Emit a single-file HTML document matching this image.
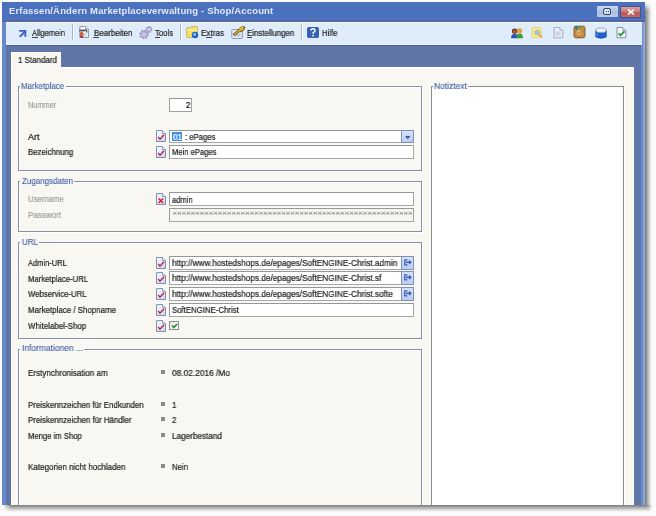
<!DOCTYPE html>
<html><head><meta charset="utf-8">
<style>
*{margin:0;padding:0;box-sizing:border-box}
:root{--glab:#4260ac;--dis:#a0a0a0;--txt:#1e1e1e}
html,body{width:656px;height:516px;overflow:hidden;background:#fbfbfb}
body{position:relative;font-family:"Liberation Sans",sans-serif;font-size:9px;line-height:10px;color:var(--txt)}
.a{position:absolute}
.t{position:absolute;white-space:pre;font-size:9px;line-height:10px;transform-origin:0 0;will-change:transform;-webkit-text-stroke:0.22px currentColor}
#clip{position:absolute;left:0;top:0;width:656px;height:505px;overflow:hidden}
#shadowR{left:645px;top:3px;width:7px;height:509px;background:linear-gradient(90deg,#7a7a7a,#b8b8b8 45%,#e8e8e8 80%,#fafafa);-webkit-mask-image:linear-gradient(180deg,transparent 0,#000 8px,#000 calc(100% - 7px),transparent)}
#shadowB{left:3px;top:505px;width:649px;height:7px;background:linear-gradient(180deg,#7a7a7a,#b8b8b8 45%,#e8e8e8 80%,#fafafa);-webkit-mask-image:linear-gradient(90deg,transparent 0,#000 8px,#000 calc(100% - 7px),transparent)}
#win{left:2px;top:2px;width:643px;height:503px;background:#5a7cc6}
#title{left:2px;top:2px;width:643px;height:20px;background:#4b70bd;border-bottom:2px solid #56689c}
#titletext{left:9px;top:6px;font-size:9.5px;line-height:10px;font-weight:bold;color:#e0e8f6;letter-spacing:0.15px;transform:none;-webkit-text-stroke:0}
#lb{left:2px;top:22px;width:4px;height:483px;background:#6888cc}
#rb{left:641px;top:22px;width:4px;height:483px;background:linear-gradient(90deg,#6686cc 0,#7292d6 50%,#9ab2da 75%,#8aa2cc)}
#toolbar{left:6px;top:22px;width:636px;height:23px;background:#dfedfb;border-top:1px solid #f2f9ff;border-bottom:1px solid #f0f7ff}
#strip{left:6px;top:45px;width:635px;height:460px;background:#6076a7;border-top:1px solid #4a5c8c}
#panel{left:11px;top:67px;width:623px;height:438px;background:#f9f7f1;border-top:1px solid #fff;border-right:1px solid #fff;border-left:1px solid #fbfcfd}
#tab{left:11px;top:52px;width:50px;height:16px;background:#f9f7f1;border-top:1px solid #fff;border-left:1px solid #fff}
.sep{position:absolute;top:24px;width:2px;height:16px;background:#a7b4cc;border-right:1px solid #fff}
.grp{position:absolute;border:1px solid #8a8ea8;box-shadow:1px 1px 0 #fff,inset 1px 1px 0 #fff}
.gmask{position:absolute;height:3px;background:#f9f7f1}
.inp{position:absolute;left:169px;width:245px;height:14px;background:#fff;border:1px solid #a6a6a6;border-top-color:#969696;border-left-color:#9c9c9c}
.ico{position:absolute;left:156px;width:10px;height:12px}
.btn{position:absolute;left:401px;width:13px;height:14px;background:linear-gradient(180deg,#d6e2fa,#b9ccf3);border:1px solid #7f90b8}
.bul{position:absolute;left:161px;width:4px;height:4px;background:#8a8a8a}

</style></head><body>
<div id="clip">
<div class="a" id="win"></div>
<div class="a" id="title"></div>
<div class="t" id="titletext">Erfassen/Ändern Marketplaceverwaltung - Shop/Account</div>
<div class="a" style="left:597px;top:6px;width:21px;height:11px;background:linear-gradient(180deg,#c8d8f0,#b4c6e6 45%,#a8bcdc 55%,#bccde9);border-radius:1px"></div>
<div class="a" style="left:603px;top:8px;width:8px;height:7px;border:1.3px solid #34426c;border-radius:2px;background:#d6e0f0"></div>
<div class="a" style="left:605.5px;top:10.8px;width:1.3px;height:1.3px;background:#34426c"></div>
<div class="a" style="left:607.5px;top:10.8px;width:1.3px;height:1.3px;background:#34426c"></div>
<div class="a" style="left:620px;top:6px;width:21px;height:12px;background:linear-gradient(180deg,#daa0a0,#cc7a7a 45%,#bc5454 60%,#c86a6a);border:1px solid #45508a;border-radius:1px"></div>
<svg class="a" style="left:627px;top:9px" width="8" height="6" viewBox="0 0 8 6"><path d="M1 0.5 L7 5.5 M7 0.5 L1 5.5" stroke="#f6f6f6" stroke-width="1.7"/></svg>
<div class="a" id="lb"></div>
<div class="a" id="rb"></div>
<div class="a" id="toolbar"></div>
<div class="a" id="strip"></div>
<div class="a" id="panel"></div>
<div class="a" id="tab"></div>

<svg class="a" style="left:18px;top:29px" width="10" height="10" viewBox="0 0 10 10"><path d="M1.8 7.8 L7.2 2.4" stroke="#3b5ec6" stroke-width="2" fill="none"/><path d="M1.2 0.9 H8.3 V7.8 L6.4 7.8 L6.4 2.8 L1.2 2.8 Z" fill="#3b5ec6"/></svg>
<div class="a" style="left:32px;top:37px;width:6px;height:1px;background:#444"></div>
<div class="sep" style="left:72px"></div>
<svg class="a" style="left:78px;top:25px" width="12" height="14" viewBox="0 0 12 14"><path d="M1.8 1.5 H7.8 L10.5 4.2 V12.5 H1.8 Z" fill="#f2f5fa" stroke="#8a92a8" stroke-width="0.9"/><path d="M7.8 1.5 V4.2 H10.5" fill="#e2e6ee" stroke="#8a92a8" stroke-width="0.7"/><rect x="4.5" y="8" width="4" height="3.5" fill="#d0d8ea"/><path d="M1.2 5.5 H7.4" stroke="#4e545e" stroke-width="1.8"/><path d="M7 4.7 Q8.8 4.7 8.8 6.6 V7.6" stroke="#4e545e" stroke-width="1.3" fill="none"/><ellipse cx="3.6" cy="9.6" rx="1.9" ry="2.9" fill="#d5603f"/><ellipse cx="3.7" cy="11.8" rx="1.3" ry="0.9" fill="#7a1e0e"/></svg>
<div class="a" style="left:93px;top:37px;width:6px;height:1px;background:#444"></div>
<svg class="a" style="left:137px;top:25px" width="16" height="15" viewBox="0 0 16 15"><g fill="none" stroke="#9a96c8"><circle cx="7" cy="9.5" r="3.9" stroke-width="1.8" stroke-dasharray="1.6 1.45"/><circle cx="11.9" cy="4.6" r="2.8" stroke-width="1.5" stroke-dasharray="1.3 1.1"/></g><circle cx="7" cy="9.5" r="3.3" fill="#c4c0e4" stroke="#8c88bc" stroke-width="0.7"/><circle cx="7" cy="9.5" r="1.3" fill="#eeecfa" stroke="#9490c0" stroke-width="0.6"/><circle cx="11.9" cy="4.6" r="2.3" fill="#c4c0e4" stroke="#8c88bc" stroke-width="0.7"/><circle cx="11.9" cy="4.6" r="0.9" fill="#eeecfa"/></svg>
<div class="a" style="left:155px;top:37px;width:5px;height:1px;background:#444"></div>
<div class="sep" style="left:180px"></div>
<svg class="a" style="left:185px;top:25px" width="14" height="14" viewBox="0 0 14 14"><path d="M1.5 4 Q1.5 2.5 3 2.5 H5.5 L6.5 1.5 H11.5 Q12.5 1.5 12.5 2.5 V11.5 Q12.5 12.5 11.5 12.5 H3 Q1.5 12.5 1.5 11 Z" fill="#f2dc6a" stroke="#d0b040" stroke-width="0.8"/><path d="M2 5 H12" stroke="#fff6b8" stroke-width="1"/><circle cx="10" cy="10" r="3.2" fill="#1e64c8"/><circle cx="9.6" cy="9.4" r="1.3" fill="#9ad4ff"/></svg>
<div class="a" style="left:206px;top:37px;width:6px;height:1px;background:#444"></div>
<svg class="a" style="left:230px;top:25px" width="16" height="15" viewBox="0 0 16 15"><rect x="1.8" y="4.5" width="10.5" height="9" rx="1" fill="#e8eef8" stroke="#8a96b4"/><rect x="3.5" y="9" width="7" height="2.5" fill="#b4c0da"/><path d="M3 9.2 L8 5.2 Q9.5 2.4 12.5 1.6 L15 2 L13.8 5 Q12 7 9.6 6.8 L4.6 10.4 Z" fill="#d4aa1c" stroke="#5c4410" stroke-width="0.8"/><path d="M9.5 3.6 Q11 2.6 12.8 2.6" stroke="#f4e070" stroke-width="0.8" fill="none"/></svg>
<div class="a" style="left:247px;top:37px;width:5px;height:1px;background:#444"></div>
<div class="sep" style="left:301px"></div>
<svg class="a" style="left:307px;top:27px" width="12" height="11" viewBox="0 0 12 11"><rect x="0.5" y="0.3" width="11" height="10.5" rx="1.5" fill="#3562b8" stroke="#2a4e9a" stroke-width="0.8"/><path d="M4 3.6 Q4 1.8 6 1.8 Q8 1.8 8 3.6 Q8 4.8 6.2 5.6 V6.8" stroke="#fff" stroke-width="1.5" fill="none"/><rect x="5.4" y="7.8" width="1.6" height="1.6" fill="#fff"/></svg>

<svg class="a" style="left:510px;top:27px" width="14" height="12" viewBox="0 0 14 12"><path d="M1 11.3 Q1 7 4.6 7 Q8.2 7 8.2 11.3 Z" fill="#2a50b4"/><circle cx="4.6" cy="4.3" r="2.7" fill="#6a3a26"/><circle cx="4.6" cy="4.8" r="1.7" fill="#b0603a"/><path d="M6.2 11.3 Q6.2 6.6 9.6 6.6 Q13 6.6 13 11.3 Z" fill="#3c9a4c"/><circle cx="9.6" cy="3.9" r="2.6" fill="#e6a040"/></svg>
<svg class="a" style="left:531px;top:26px" width="13" height="13" viewBox="0 0 13 13"><path d="M1 3 Q1 1.5 2.5 1.5 H8.5 Q10 1.5 10 3 V10 Q10 11.5 8.5 11.5 H2.5 Q1 11.5 1 10 Z" fill="#f6eaa0" stroke="#e8d060" stroke-width="1"/><circle cx="6.2" cy="6.6" r="2.6" fill="#8cc8ec" stroke="#d8c060" stroke-width="0.8"/><path d="M8.2 8.6 L11 11.4" stroke="#e89850" stroke-width="2"/></svg>
<svg class="a" style="left:553px;top:26px" width="11" height="13" viewBox="0 0 11 13"><path d="M1 1.5 H6.8 L9.8 4.5 V11.8 H1 Z" fill="#eceff6" stroke="#a4acc4"/><path d="M6.8 1.5 V4.5 H9.8" fill="#dce0ea" stroke="#a4acc4" stroke-width="0.8"/><rect x="2.5" y="5.5" width="5" height="4.5" fill="#d0d6e4"/></svg>
<svg class="a" style="left:573px;top:25px" width="13" height="14" viewBox="0 0 13 14"><rect x="1" y="1.2" width="11" height="11.6" rx="2" fill="#c48c44" stroke="#7a5020" stroke-width="0.9"/><path d="M1.5 2 Q2 1.4 3 1.4 H5.5 L3.5 5.5 Z" fill="#1e7ca8"/><path d="M5.5 1.4 H9 L6.5 5 Z" fill="#5aa838"/><circle cx="6" cy="7.5" r="2.6" fill="#e4b474"/><path d="M4.6 7 L6 8.6 L8 6.2" stroke="#b07030" stroke-width="0.9" fill="none"/></svg>
<svg class="a" style="left:595px;top:27px" width="12" height="12" viewBox="0 0 12 12"><path d="M0.8 3.2 V10 Q6 12.6 11.2 10 V3.2 Z" fill="#1e62d2" stroke="#1646a0" stroke-width="0.8"/><path d="M2 6 V9.5" stroke="#5aa0f0" stroke-width="1"/><ellipse cx="6" cy="3.2" rx="5.2" ry="2.3" fill="#eef2f8" stroke="#8a98b8" stroke-width="0.8"/></svg>
<svg class="a" style="left:616px;top:26px" width="11" height="13" viewBox="0 0 11 13"><path d="M1 1.5 H6.8 L9.8 4.5 V11.8 H1 Z" fill="#f6f8fb" stroke="#868ea6"/><path d="M6.8 1.5 V4.5 H9.8" fill="#e4e8f0" stroke="#868ea6" stroke-width="0.8"/><path d="M2.6 7.4 L4.6 9.4 L8.4 5.4" stroke="#2a9a3a" stroke-width="1.8" fill="none"/></svg>

<!-- groups -->
<div class="grp" style="left:18px;top:86px;width:404px;height:85px"></div>
<div class="gmask" style="left:20px;top:85px;width:46px"></div>
<div class="grp" style="left:18px;top:181px;width:404px;height:51px"></div>
<div class="gmask" style="left:20px;top:180px;width:54px"></div>
<div class="grp" style="left:18px;top:242px;width:404px;height:97px"></div>
<div class="gmask" style="left:20px;top:241px;width:19px"></div>
<div class="grp" style="left:18px;top:349px;width:404px;height:170px"></div>
<div class="gmask" style="left:20px;top:348px;width:64px"></div>
<div class="grp" style="left:431px;top:86px;width:193px;height:430px;background:#fff;border-color:#8c8c8c"></div>
<div class="gmask" style="left:433px;top:85px;width:35px"></div>

<div class="a" style="left:169px;top:98px;width:23px;height:14px;background:#fff;border:1px solid #a2a2a2;border-top-color:#969696"></div>
<svg class="ico" style="top:130px" viewBox="0 0 10 12"><use href="#chk"/></svg>
<svg class="ico" style="top:146px" viewBox="0 0 10 12"><use href="#chk"/></svg>
<div class="inp" style="top:130px;height:13px"><div class="a" style="left:2px;top:1px;width:10px;height:9px;background:#3d8ee6"></div></div>
<div class="btn" style="top:130px;height:13px"><svg class="a" style="left:3px;top:5px" width="6" height="4"><path d="M0 0 H5.5 L2.75 3.2 Z" fill="#3a58a0"/></svg></div>
<div class="inp" style="top:145px"></div>

<svg class="ico" style="top:193px" viewBox="0 0 10 12"><use href="#xdoc"/></svg>
<div class="inp" style="top:192px"></div>
<div class="inp" style="top:208px;background:#f6f5f0"></div>
<svg class="a" style="left:172px;top:211px" width="240" height="5" viewBox="0 0 240 5"><path d="M1.30 0.80L4.30 3.80M4.30 0.80L1.30 3.80M1.10 2.30H4.50M5.83 0.80L8.83 3.80M8.83 0.80L5.83 3.80M5.63 2.30H9.03M10.36 0.80L13.36 3.80M13.36 0.80L10.36 3.80M10.16 2.30H13.56M14.89 0.80L17.89 3.80M17.89 0.80L14.89 3.80M14.69 2.30H18.09M19.42 0.80L22.42 3.80M22.42 0.80L19.42 3.80M19.22 2.30H22.62M23.95 0.80L26.95 3.80M26.95 0.80L23.95 3.80M23.75 2.30H27.15M28.48 0.80L31.48 3.80M31.48 0.80L28.48 3.80M28.28 2.30H31.68M33.01 0.80L36.01 3.80M36.01 0.80L33.01 3.80M32.81 2.30H36.21M37.54 0.80L40.54 3.80M40.54 0.80L37.54 3.80M37.34 2.30H40.74M42.07 0.80L45.07 3.80M45.07 0.80L42.07 3.80M41.87 2.30H45.27M46.60 0.80L49.60 3.80M49.60 0.80L46.60 3.80M46.40 2.30H49.80M51.13 0.80L54.13 3.80M54.13 0.80L51.13 3.80M50.93 2.30H54.33M55.66 0.80L58.66 3.80M58.66 0.80L55.66 3.80M55.46 2.30H58.86M60.19 0.80L63.19 3.80M63.19 0.80L60.19 3.80M59.99 2.30H63.39M64.72 0.80L67.72 3.80M67.72 0.80L64.72 3.80M64.52 2.30H67.92M69.25 0.80L72.25 3.80M72.25 0.80L69.25 3.80M69.05 2.30H72.45M73.78 0.80L76.78 3.80M76.78 0.80L73.78 3.80M73.58 2.30H76.98M78.31 0.80L81.31 3.80M81.31 0.80L78.31 3.80M78.11 2.30H81.51M82.84 0.80L85.84 3.80M85.84 0.80L82.84 3.80M82.64 2.30H86.04M87.37 0.80L90.37 3.80M90.37 0.80L87.37 3.80M87.17 2.30H90.57M91.90 0.80L94.90 3.80M94.90 0.80L91.90 3.80M91.70 2.30H95.10M96.43 0.80L99.43 3.80M99.43 0.80L96.43 3.80M96.23 2.30H99.63M100.96 0.80L103.96 3.80M103.96 0.80L100.96 3.80M100.76 2.30H104.16M105.49 0.80L108.49 3.80M108.49 0.80L105.49 3.80M105.29 2.30H108.69M110.02 0.80L113.02 3.80M113.02 0.80L110.02 3.80M109.82 2.30H113.22M114.55 0.80L117.55 3.80M117.55 0.80L114.55 3.80M114.35 2.30H117.75M119.08 0.80L122.08 3.80M122.08 0.80L119.08 3.80M118.88 2.30H122.28M123.61 0.80L126.61 3.80M126.61 0.80L123.61 3.80M123.41 2.30H126.81M128.14 0.80L131.14 3.80M131.14 0.80L128.14 3.80M127.94 2.30H131.34M132.67 0.80L135.67 3.80M135.67 0.80L132.67 3.80M132.47 2.30H135.87M137.20 0.80L140.20 3.80M140.20 0.80L137.20 3.80M137.00 2.30H140.40M141.73 0.80L144.73 3.80M144.73 0.80L141.73 3.80M141.53 2.30H144.93M146.26 0.80L149.26 3.80M149.26 0.80L146.26 3.80M146.06 2.30H149.46M150.79 0.80L153.79 3.80M153.79 0.80L150.79 3.80M150.59 2.30H153.99M155.32 0.80L158.32 3.80M158.32 0.80L155.32 3.80M155.12 2.30H158.52M159.85 0.80L162.85 3.80M162.85 0.80L159.85 3.80M159.65 2.30H163.05M164.38 0.80L167.38 3.80M167.38 0.80L164.38 3.80M164.18 2.30H167.58M168.91 0.80L171.91 3.80M171.91 0.80L168.91 3.80M168.71 2.30H172.11M173.44 0.80L176.44 3.80M176.44 0.80L173.44 3.80M173.24 2.30H176.64M177.97 0.80L180.97 3.80M180.97 0.80L177.97 3.80M177.77 2.30H181.17M182.50 0.80L185.50 3.80M185.50 0.80L182.50 3.80M182.30 2.30H185.70M187.03 0.80L190.03 3.80M190.03 0.80L187.03 3.80M186.83 2.30H190.23M191.56 0.80L194.56 3.80M194.56 0.80L191.56 3.80M191.36 2.30H194.76M196.09 0.80L199.09 3.80M199.09 0.80L196.09 3.80M195.89 2.30H199.29M200.62 0.80L203.62 3.80M203.62 0.80L200.62 3.80M200.42 2.30H203.82M205.15 0.80L208.15 3.80M208.15 0.80L205.15 3.80M204.95 2.30H208.35M209.68 0.80L212.68 3.80M212.68 0.80L209.68 3.80M209.48 2.30H212.88M214.21 0.80L217.21 3.80M217.21 0.80L214.21 3.80M214.01 2.30H217.41M218.74 0.80L221.74 3.80M221.74 0.80L218.74 3.80M218.54 2.30H221.94M223.27 0.80L226.27 3.80M226.27 0.80L223.27 3.80M223.07 2.30H226.47M227.80 0.80L230.80 3.80M230.80 0.80L227.80 3.80M227.60 2.30H231.00M232.33 0.80L235.33 3.80M235.33 0.80L232.33 3.80M232.13 2.30H235.53M236.86 0.80L239.86 3.80M239.86 0.80L236.86 3.80M236.66 2.30H240.06" stroke="#9c9c9c" stroke-width="0.9" fill="none"/></svg>

<svg class="ico" style="top:257px" viewBox="0 0 10 12"><use href="#chk"/></svg>
<svg class="ico" style="top:272px" viewBox="0 0 10 12"><use href="#chk"/></svg>
<svg class="ico" style="top:288px" viewBox="0 0 10 12"><use href="#chk"/></svg>
<svg class="ico" style="top:304px" viewBox="0 0 10 12"><use href="#chk"/></svg>
<svg class="ico" style="top:320px" viewBox="0 0 10 12"><use href="#chk"/></svg>
<div class="inp" style="top:256px;width:233px"></div>
<div class="btn" style="top:256px"><svg class="a" style="left:2px;top:2px" width="9" height="7" viewBox="0 0 9 7"><use href="#go"/></svg></div>
<div class="inp" style="top:271px;width:233px"></div>
<div class="btn" style="top:271px"><svg class="a" style="left:2px;top:2px" width="9" height="7" viewBox="0 0 9 7"><use href="#go"/></svg></div>
<div class="inp" style="top:287px;width:233px"></div>
<div class="btn" style="top:287px"><svg class="a" style="left:2px;top:2px" width="9" height="7" viewBox="0 0 9 7"><use href="#go"/></svg></div>
<div class="inp" style="top:303px"></div>
<div class="a" style="left:169px;top:321px;width:10px;height:9px;background:linear-gradient(135deg,#e4e4e0,#fbfbf8);border:1px solid #8e8e8e"></div>
<svg class="a" style="left:171px;top:322px" width="7" height="7" viewBox="0 0 7 7"><path d="M1 3.6 L2.8 5.4 L6.2 2" stroke="#1e9428" stroke-width="1.6" fill="none"/></svg>

<div class="bul" style="top:370px"></div>
<div class="bul" style="top:402px"></div>
<div class="bul" style="top:417px"></div>
<div class="bul" style="top:433px"></div>
<div class="bul" style="top:464px"></div>
</div>
<div class="a" id="shadowR"></div>
<div class="a" id="shadowB"></div>

<svg width="0" height="0" style="position:absolute">
<defs>
<linearGradient id="docg" x1="0" y1="0" x2="1" y2="1"><stop offset="0" stop-color="#fafcff"/><stop offset="1" stop-color="#c6d4ee"/></linearGradient>
<g id="chk"><path d="M0.5 0.5 H6.5 L9.5 3.5 V11.5 H0.5 Z" fill="url(#docg)" stroke="#7282aa" stroke-width="0.9"/><path d="M6.5 0.5 V3.5 H9.5" fill="#f0f4fa" stroke="#7282aa" stroke-width="0.7"/><path d="M2.2 7 L4 9.2 L8 4.8" stroke="#c41e3c" stroke-width="1.3" fill="none"/></g>
<g id="xdoc"><path d="M0.5 0.5 H6.5 L9.5 3.5 V11.5 H0.5 Z" fill="url(#docg)" stroke="#7282aa" stroke-width="0.9"/><path d="M6.5 0.5 V3.5 H9.5" fill="#f0f4fa" stroke="#7282aa" stroke-width="0.7"/><path d="M2.6 5.4 L7 10 M7 5.4 L2.6 10" stroke="#e01828" stroke-width="1.5" fill="none"/></g>
<g id="go"><path d="M3.4 0.8 H0.8 V5.8 H3.4" stroke="#3a5cb4" stroke-width="1.3" fill="none" stroke-linejoin="round"/><path d="M2 3.3 H5.6" stroke="#3a5cb4" stroke-width="1.5"/><path d="M5 0.9 L7.9 3.3 L5 5.7 Z" fill="#3a5cb4"/></g>
</defs></svg>

<div id="texts">
<div class="t" style="left:32.4px;top:28px;transform:scaleX(0.835);">Allgemein</div>
<div class="t" style="left:93.5px;top:28px;transform:scaleX(0.884);">Bearbeiten</div>
<div class="t" style="left:154.7px;top:28px;transform:scaleX(0.857);">Tools</div>
<div class="t" style="left:201.3px;top:28px;transform:scaleX(0.901);">Extras</div>
<div class="t" style="left:246.7px;top:28px;transform:scaleX(0.875);">Einstellungen</div>
<div class="t" style="left:321.9px;top:28px;transform:scaleX(0.855);">Hilfe</div>
<div class="t" style="left:17.7px;top:55px;transform:scaleX(0.885);">1 Standard</div>
<div class="t" style="left:21.4px;top:81px;transform:scaleX(0.879);color:var(--glab);-webkit-text-stroke:0.12px currentColor">Marketplace</div>
<div class="t" style="left:21.9px;top:176px;transform:scaleX(0.886);color:var(--glab);-webkit-text-stroke:0.12px currentColor">Zugangsdaten</div>
<div class="t" style="left:21.9px;top:237px;transform:scaleX(0.888);color:var(--glab);-webkit-text-stroke:0.12px currentColor">URL</div>
<div class="t" style="left:21.9px;top:343px;transform:scaleX(0.938);color:var(--glab);-webkit-text-stroke:0.12px currentColor">Informationen ...</div>
<div class="t" style="left:434.4px;top:81px;transform:scaleX(0.942);color:var(--glab);-webkit-text-stroke:0.12px currentColor">Notiztext</div>
<div class="t" style="left:28px;top:100px;transform:scaleX(0.814);color:var(--dis)">Nummer</div>
<div class="t" style="left:28px;top:132px;transform:scaleX(0.999);">Art</div>
<div class="t" style="left:28px;top:147px;transform:scaleX(0.870);">Bezeichnung</div>
<div class="t" style="left:28px;top:194px;transform:scaleX(0.860);color:var(--dis)">Username</div>
<div class="t" style="left:28px;top:210px;transform:scaleX(0.897);color:var(--dis)">Passwort</div>
<div class="t" style="left:28px;top:258px;transform:scaleX(0.834);">Admin-URL</div>
<div class="t" style="left:28px;top:274px;transform:scaleX(0.858);">Marketplace-URL</div>
<div class="t" style="left:28px;top:289px;transform:scaleX(0.865);">Webservice-URL</div>
<div class="t" style="left:28px;top:305px;transform:scaleX(0.880);">Marketplace / Shopname</div>
<div class="t" style="left:28px;top:321px;transform:scaleX(0.881);">Whitelabel-Shop</div>
<div class="t" style="left:28px;top:368px;transform:scaleX(0.895);">Erstynchronisation am</div>
<div class="t" style="left:28px;top:400px;transform:scaleX(0.876);">Preiskennzeichen für Endkunden</div>
<div class="t" style="left:28px;top:415px;transform:scaleX(0.877);">Preiskennzeichen für Händler</div>
<div class="t" style="left:28px;top:431px;transform:scaleX(0.853);">Menge im Shop</div>
<div class="t" style="left:28px;top:462px;transform:scaleX(0.894);">Kategorien nicht hochladen</div>
<div class="t" style="left:185.5px;top:100px;transform:scaleX(0.870);color:#000">2</div>
<div class="t" style="left:172.5px;top:132px;transform:scaleX(0.899);color:#fff">01</div>
<div class="t" style="left:184.9px;top:132px;transform:scaleX(0.858);">: ePages</div>
<div class="t" style="left:172px;top:147px;transform:scaleX(0.847);">Mein ePages</div>
<div class="t" style="left:172px;top:195px;transform:scaleX(0.844);">admin</div>
<div class="t" style="left:172px;top:258px;transform:scaleX(0.916);">http://www.hostedshops.de/epages/SoftENGINE-Christ.admin</div>
<div class="t" style="left:172px;top:273px;transform:scaleX(0.916);">http://www.hostedshops.de/epages/SoftENGINE-Christ.sf</div>
<div class="t" style="left:172px;top:289px;transform:scaleX(0.916);">http://www.hostedshops.de/epages/SoftENGINE-Christ.softe</div>
<div class="t" style="left:172px;top:305px;transform:scaleX(0.867);">SoftENGINE-Christ</div>
<div class="t" style="left:172px;top:368px;transform:scaleX(0.927);">08.02.2016 /Mo</div>
<div class="t" style="left:172px;top:400px;transform:scaleX(0.870);">1</div>
<div class="t" style="left:172px;top:415px;transform:scaleX(0.870);">2</div>
<div class="t" style="left:172px;top:431px;transform:scaleX(0.907);">Lagerbestand</div>
<div class="t" style="left:172px;top:462px;transform:scaleX(0.870);">Nein</div>
</div>
</body></html>
